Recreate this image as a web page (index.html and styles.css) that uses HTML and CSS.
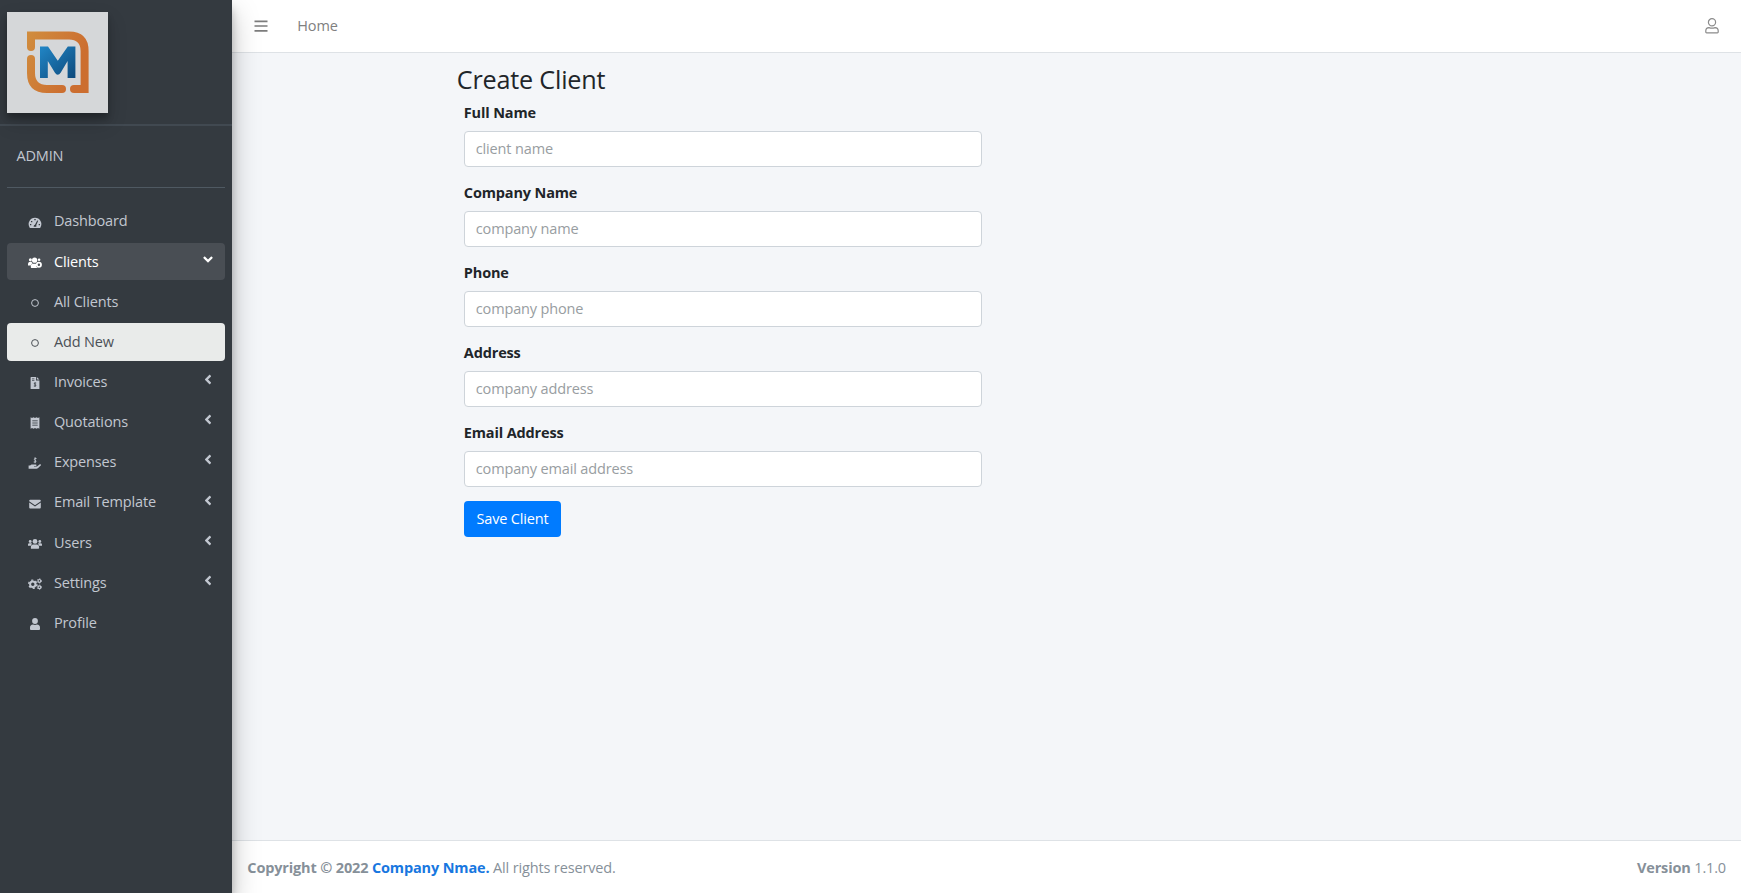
FILE: index.html
```html
<!DOCTYPE html>
<html lang="en">
<head>
<meta charset="utf-8">
<title>Create Client</title>
<link rel="stylesheet" href="styles.css">
</head>
<body>
<svg class="defs" aria-hidden="true">
  <symbol id="angle-left" viewBox="0 0 256 512"><path d="M31.7 239l136-136c9.4-9.4 24.6-9.4 33.9 0l22.6 22.6c9.4 9.4 9.4 24.6 0 33.9L127.9 256l96.4 96.4c9.4 9.4 9.4 24.6 0 33.9L201.7 409c-9.4 9.4-24.6 9.4-33.9 0l-136-136c-9.5-9.4-9.5-24.6-.1-34z"/></symbol>
  <symbol id="circle" viewBox="0 0 14 12"><circle cx="7" cy="6" r="3.4" fill="none" stroke="currentColor"/></symbol>
</svg>
<div class="wrapper">
  <aside class="sidebar">
    <a class="brand" href="#">
      <svg class="logo" viewBox="0 0 101 101">
        <defs>
          <linearGradient id="orange" x1="20" y1="0" x2="82" y2="30" gradientUnits="userSpaceOnUse"><stop stop-color="#d19241"/><stop offset="1" stop-color="#cc6e30"/></linearGradient>
          <linearGradient id="blue" x1="0" y1="0" x2="1" y2="1"><stop stop-color="#2186c6"/><stop offset="1" stop-color="#0d4a7c"/></linearGradient>
        </defs>
        <rect width="101" height="101" fill="#d5d7d9"/>
        <g fill="none" stroke="url(#orange)" stroke-width="8">
          <path d="M24 35V23.4H62Q77.6 23.4 77.6 39V77H67"/>
          <path d="M24 47V61Q24 77 40 77H55"/>
        </g>
        <g fill="url(#orange)"><circle cx="24" cy="35" r="4"/><circle cx="24" cy="47" r="4"/><circle cx="55" cy="77" r="4"/><circle cx="67" cy="77" r="4"/></g>
        <path fill="url(#blue)" d="M33 34.5H41L50.8 48.8L60.8 34.5H68.4V66H60.6V49L53.8 60.4Q50.7 65 47.8 60.4L40.8 49V66H33Z"/>
      </svg>
    </a>
    <div class="side-body">
      <div class="user-panel">ADMIN</div>
      <nav class="menu">
        <a class="item" href="#"><svg class="icon" viewBox="0 0 14 12"><path fill="currentColor" fill-rule="evenodd" d="M7 .8A6.3 6.3 0 0 0 1.6 10.4Q1.8 11 2.4 11H11.6Q12.2 11 12.4 10.4A6.3 6.3 0 0 0 7 .8ZM6.3 2h1.4v1.2H6.3ZM3 4h1.3v1.2H3ZM9.2 3.4 10.2 3.8 8.2 8.2Q8.7 9 8.1 9.8H5.8Q5.3 8.3 7 7.7ZM2 7h1.3v1.3H2ZM10.7 7H12v1.3h-1.3Z"/></svg><span>Dashboard</span></a>
        <a class="item open" href="#"><svg class="icon" viewBox="0 0 14 12"><g fill="currentColor"><circle cx="2.4" cy="2.7" r="1.5"/><circle cx="6.6" cy="3.2" r="2.6"/><circle cx="11.1" cy="2.8" r="1.3"/><path d="M0 7.5Q0 4.8 2.2 4.8H3.5Q4 6 4.8 6.3Q3 7 2.7 8.4H0ZM3.4 11Q2.8 11 2.8 10V9.2Q2.8 6.7 5.4 6.7H8.2L8 9.5 9.6 11Z"/></g><circle cx="10.9" cy="7.7" r="2.1" fill="none" stroke="currentColor" stroke-width="1.8"/></svg><span>Clients</span><svg class="angle down"><use href="#angle-left"/></svg></a>
        <a class="item" href="#"><svg class="icon"><use href="#circle"/></svg><span>All Clients</span></a>
        <a class="item active" href="#"><svg class="icon"><use href="#circle"/></svg><span>Add New</span></a>
        <a class="item" href="#"><svg class="icon" viewBox="0 0 14 12"><path fill="currentColor" d="M3 0H8V3.4H11.4V12H2.6V.5Z"/><path fill="currentColor" d="M8.8 0 11.4 2.6H8.8Z"/><path d="M4 1.8H6.4M4 3.4H6.4M8.2 6H6.4Q5.8 7 7 7.3T7.8 9H5.8M7 5.3V10" fill="none" stroke="#343a40" stroke-width=".7"/></svg><span>Invoices</span><svg class="angle"><use href="#angle-left"/></svg></a>
        <a class="item" href="#"><svg class="icon" viewBox="0 0 14 12"><path fill="currentColor" d="M2.6.2 4 1 5.5.2 7 1 8.5.2 10 1 11.4.2V11.8L10 11 8.5 11.8 7 11 5.5 11.8 4 11 2.6 11.8Z"/><path d="M4.3 3.8H9.7M4.3 6H9.7M4.3 8.2H9.7" stroke="#343a40" stroke-width=".8"/></svg><span>Quotations</span><svg class="angle"><use href="#angle-left"/></svg></a>
        <a class="item" href="#"><svg class="icon" viewBox="0 0 14 12"><path fill="currentColor" d="M.6 8.4H2.1L3.5 7.4H8.2Q9 8.4 8 9H6V9.4H9L11.8 7.3Q13.2 7 13 8.3L9.8 11.3Q9.2 11.7 8.6 11.7H.6Z"/><path d="M8.5 1.5H6.8Q5.6 2.5 7 3.1T7.8 5H5.7M7.1.2V6.2" fill="none" stroke="currentColor" stroke-width=".9"/></svg><span>Expenses</span><svg class="angle"><use href="#angle-left"/></svg></a>
        <a class="item" href="#"><svg class="icon" viewBox="0 0 14 12"><path fill="currentColor" d="M1.2 2.7Q1.2 1.7 2.2 1.7H11.8Q12.8 1.7 12.8 2.7V3.3L7 7.2 1.2 3.3ZM1.2 4.5 7 8.4 12.8 4.5V9.6Q12.8 10.6 11.8 10.6H2.2Q1.2 10.6 1.2 9.6Z"/></svg><span>Email Template</span><svg class="angle"><use href="#angle-left"/></svg></a>
        <a class="item" href="#"><svg class="icon" viewBox="0 0 14 12"><g fill="currentColor"><circle cx="2.2" cy="3.5" r="1.4"/><circle cx="7" cy="3.4" r="2.4"/><circle cx="11.8" cy="3.5" r="1.4"/><path d="M0 7.7V6.6Q0 5.3 1.4 5.3H3.3Q4 5.6 4 6Q3.1 6.5 2.8 7.7ZM14 7.7V6.6Q14 5.3 12.6 5.3H10.7Q10 5.6 10 6Q10.9 6.5 11.2 7.7ZM2.9 10.8V9Q2.9 6.4 5.3 6.4H8.7Q11.1 6.4 11.1 9V10Q11.1 10.8 10.3 10.8H3.7Z"/></g></svg><span>Users</span><svg class="angle"><use href="#angle-left"/></svg></a>
        <a class="item" href="#"><svg class="icon" viewBox="0 0 14 12"><g fill="none" stroke="currentColor"><circle cx="4.8" cy="6.2" r="2.7" stroke-width="2"/><circle cx="4.8" cy="6.2" r="4.1" stroke-width="1.4" stroke-dasharray="2.1 2.193"/><circle cx="11.4" cy="2.9" r="1.4" stroke-width="1.2"/><circle cx="11.4" cy="2.9" r="2.2" stroke-width=".8" stroke-dasharray="1.1 1.2"/><circle cx="11.4" cy="9.2" r="1.4" stroke-width="1.2"/><circle cx="11.4" cy="9.2" r="2.2" stroke-width=".8" stroke-dasharray="1.1 1.2"/></g></svg><span>Settings</span><svg class="angle"><use href="#angle-left"/></svg></a>
        <a class="item" href="#"><svg class="icon" viewBox="0 0 14 12"><g fill="currentColor"><circle cx="7" cy="3" r="2.9"/><path d="M2 11V9.8Q2 6.8 5 6.6Q7 7.4 9 6.6Q12 6.8 12 9.8V11Q12 12 11 12H3Q2 12 2 11Z"/></g></svg><span>Profile</span></a>
      </nav>
    </div>
  </aside>
  <div class="page">
    <header class="navbar">
      <svg class="bars" viewBox="0 0 14 12"><path d="M.5 1.3H13.5M.5 6H13.5M.5 10.8H13.5" stroke="#7c7c7c" stroke-width="1.7"/></svg>
      <a class="home" href="#">Home</a>
      <svg class="account" viewBox="0 0 14 16"><g fill="none" stroke="#8b8b8b" stroke-width="1.2"><circle cx="7" cy="4.3" r="3.6"/><path d="M.8 14V12.8Q.8 9.8 4 9.6Q7 10.8 10 9.6Q13.2 9.8 13.2 12.8V14Q13.2 14.8 12.4 14.8H1.6Q.8 14.8 .8 14Z"/></g></svg>
    </header>
    <main class="content">
      <h1 class="title">Create Client</h1>
      <form class="form">
        <label class="field"><span class="label">Full Name</span><input class="input" placeholder="client name"></label>
        <label class="field"><span class="label">Company Name</span><input class="input" placeholder="company name"></label>
        <label class="field"><span class="label">Phone</span><input class="input" placeholder="company phone"></label>
        <label class="field"><span class="label">Address</span><input class="input" placeholder="company address"></label>
        <label class="field"><span class="label">Email Address</span><input class="input" placeholder="company email address"></label>
        <button class="save" type="button">Save Client</button>
      </form>
    </main>
    <footer class="footer">
      <div class="copyright"><strong>Copyright © 2022 <a class="company" href="#">Company Nmae.</a></strong> All rights reserved.</div>
      <div class="version"><strong>Version</strong> 1.1.0</div>
    </footer>
  </div>
</div>
</body>
</html>
```

FILE: styles.css
```css
* { box-sizing: border-box; }
body {
  margin: 0;
  font: 14.5px/22.3px "Open Sans", "Noto Sans", sans-serif;
  letter-spacing: -0.15px;
  color: #212529;
  background: #f4f6f9;
}
a { color: inherit; text-decoration: none; }
.defs { display: none; }
.wrapper { display: flex; height: 893px; overflow: hidden; }

.sidebar {
  position: relative;
  z-index: 1;
  flex: 0 0 232.3px;
  background: #343a40;
  color: #c2c7d0;
  box-shadow: 0 13px 26px rgba(0,0,0,.25), 0 9px 9px rgba(0,0,0,.22);
}
.brand {
  display: block;
  height: 126px;
  padding: 12px 7px;
  border-bottom: 2px solid #414951;
}
.logo {
  display: block;
  width: 101px;
  height: 101px;
  box-shadow: 0 9px 18px rgba(0,0,0,.19), 0 5px 6px rgba(0,0,0,.23);
}
.side-body { padding: 0 7.4px; }
.user-panel {
  height: 62px;
  padding: 19px 9px 0;
  border-bottom: 1px solid #4f5962;
}
.menu { display: flex; flex-direction: column; gap: 3px; padding-top: 15px; }
.item {
  display: flex;
  align-items: center;
  height: 37.15px;
  padding: 0 13px 0 20.6px;
  border-radius: 4px;
}
.icon { width: 14px; height: 12px; margin: 2px 12px 0 0; }
.item span { flex: 1; }
.angle { width: 8px; height: 15px; fill: currentColor; margin-top: -5px; }
.down { transform: rotate(-90deg); }
.open { background: #494e54; color: #fff; }
.active { background: #e9ebea; color: #4c5157; }

.page { flex: 1; display: flex; flex-direction: column; }
.navbar {
  display: flex;
  align-items: center;
  height: 53px;
  padding: 0 22px;
  background: #fff;
  border-bottom: 1px solid #dee2e6;
}
.bars { width: 14px; height: 12px; }
.home { margin-left: 29px; color: #808080; }
.account { width: 14px; height: 16px; margin-left: auto; }
.content { flex: 1; padding: 10px 0 0 224.5px; }
.title { margin: 0; font-size: 25.2px; line-height: 32px; font-weight: 500; letter-spacing: -.2px; }
.form { width: 518px; margin: 7px 0 0 7px; }
.field { display: block; height: 80px; }
.label { display: block; height: 29px; font-weight: 700; }
.input {
  display: block;
  width: 100%;
  height: 35.5px;
  padding: 0 11px;
  border: 1px solid #ced4da;
  border-radius: 4px;
  font: inherit;
  letter-spacing: inherit;
  background: #fff;
}
.input::placeholder { color: #989da1; opacity: 1; }
.save {
  display: block;
  width: 97.5px;
  height: 35.5px;
  margin-top: -1px;
  padding: 0;
  border: 0;
  border-radius: 4px;
  background: #007bff;
  color: #fff;
  font: inherit;
  letter-spacing: inherit;
}
.footer {
  display: flex;
  justify-content: space-between;
  height: 53px;
  padding: 16px 15px;
  background: #fff;
  border-top: 1px solid #dee2e6;
  color: #869099;
}
.company { color: #1877e0; }
```
